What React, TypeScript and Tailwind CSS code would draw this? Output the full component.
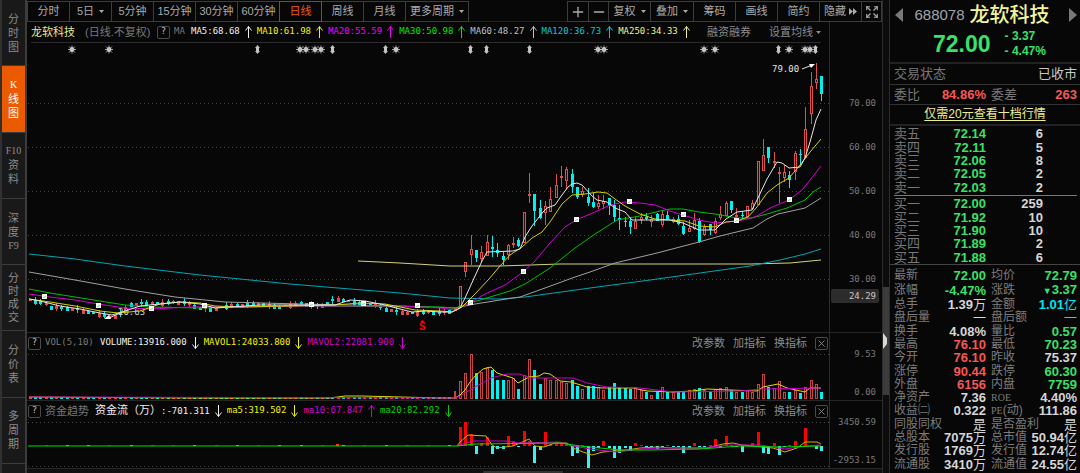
import { ReactNode } from 'react';
import { Expand, Minus, Plus, X } from 'lucide-react';

type Point = [number, number];

// kind, high, body top, body bottom, low (chart coordinates)
type Candle = ['u' | 'd', number, number, number, number];

const STEP = 5.314;
const RALLY_X = 460;

const rally: Candle[] = [
  ['u', 286, 286, 307, 307], ['u', 262, 262, 272, 277], ['u', 235, 249, 255, 265], ['d', 250, 250, 258, 262],
  ['u', 246, 252, 259, 262], ['u', 235, 242, 256, 256], ['d', 236, 247, 249, 257], ['d', 243, 250, 253, 257],
  ['d', 252, 256, 260, 265], ['u', 244, 245, 255, 260], ['u', 237, 243, 244, 248], ['d', 238, 240, 246, 247],
  ['u', 212, 212, 243, 243], ['u', 173, 194, 196, 203], ['d', 194, 194, 211, 226], ['d', 200, 208, 218, 219],
  ['u', 201, 206, 213, 225], ['u', 187, 199, 212, 212], ['u', 174, 185, 198, 198], ['u', 166, 176, 177, 187],
  ['u', 167, 169, 181, 190], ['d', 169, 174, 187, 193], ['d', 187, 187, 197, 199], ['u', 187, 191, 195, 197],
  ['d', 188, 197, 203, 206], ['d', 193, 202, 207, 208], ['u', 195, 203, 207, 209], ['u', 195, 201, 204, 209],
  ['d', 198, 198, 206, 215], ['d', 200, 205, 217, 222], ['d', 205, 218, 220, 230], ['d', 217, 221, 222, 227],
  ['d', 217, 221, 227, 234], ['u', 217, 221, 229, 229], ['u', 213, 217, 220, 224], ['d', 213, 217, 219, 220],
  ['u', 215, 219, 222, 227], ['d', 213, 214, 221, 221], ['u', 211, 214, 225, 227], ['d', 211, 215, 219, 220],
  ['u', 217, 219, 222, 223], ['d', 215, 219, 224, 225], ['d', 222, 226, 234, 235], ['u', 220, 228, 232, 232],
  ['u', 213, 220, 229, 230], ['d', 218, 221, 242, 243], ['u', 224, 227, 235, 236], ['d', 224, 224, 230, 235],
  ['u', 218, 221, 233, 234], ['u', 206, 214, 218, 220], ['u', 201, 203, 216, 216], ['d', 201, 201, 210, 213],
  ['u', 208, 215, 217, 219], ['d', 211, 215, 216, 219], ['u', 206, 206, 217, 218], ['u', 200, 203, 209, 210],
  ['u', 161, 161, 205, 205], ['u', 139, 155, 171, 171], ['d', 147, 147, 158, 163], ['u', 152, 161, 163, 168],
  ['u', 167, 172, 174, 203], ['u', 165, 172, 178, 182], ['d', 171, 175, 180, 188], ['u', 151, 153, 172, 180],
  ['d', 149, 154, 155, 165], ['u', 107, 129, 158, 158], ['u', 72, 86, 114, 124], ['u', 63, 79, 83, 89],
  ['d', 76, 76, 94, 101],
];

const rallyVolumes = [
  18, 26, 45, 26, 27, 32, 29, 19, 19, 19, 21, 10, 24, 40, 29, 15, 21, 19, 19, 17, 16, 19, 13, 10, 13, 13, 12, 9, 12,
  16, 12, 12, 10, 12, 9, 7, 4, 7, 12, 7, 7, 7, 7, 9, 10, 11, 9, 7, 10, 11, 12, 9, 7, 7, 9, 7, 15, 25, 12, 11, 18, 7,
  7, 9, 6, 12, 19, 15, 7,
];

// positive = inflow, negative = outflow
const rallyFlow = [
  19, 24, 12, -8, 3, 9, -8, -3, -3, 10, 5, -1, 15, 5, -17, -4, 14, 2, 4, 3, 3, -10, -7, 1, -22, -5, -2, 5, -2, -12,
  -7, -2, -5, 3, 1, -1, -1, -3, -1, 1, -1, -1, -7, -2, 3, -1, -1, 1, 7, -1, 10, 1, -1, -6, 1, 3, 14, -7, -8, 3, -9,
  -1, 1, 5, -1, 18, 1, -3, -5,
];

// Closing levels before the rally
const basePath: Point[] = [
  [28, 300], [45, 303], [50, 307], [75, 309], [95, 313], [110, 317], [118, 315], [125, 308], [130, 304], [150, 303],
  [185, 302], [200, 308], [215, 309], [230, 305], [260, 304], [280, 307], [300, 303], [320, 306], [335, 299],
  [345, 300], [360, 303], [375, 304], [385, 309], [395, 311], [405, 313], [440, 312], [448, 311], [460, 307],
];

const ma5: Point[] = [
  [29, 299], [40, 301], [60, 306], [80, 309], [100, 313], [112, 315], [125, 311], [140, 306], [160, 304], [180, 302],
  [200, 304], [215, 308], [230, 307], [260, 305], [335, 305], [350, 300], [365, 301], [385, 305], [400, 309],
  [412, 312], [425, 311], [440, 312], [452, 312], [460, 308], [465, 298], [475, 276], [482, 261], [487, 252],
  [513, 251], [520, 249], [525, 237], [532, 226], [543, 212], [547, 208], [555, 205], [562, 195], [568, 187],
  [572, 184], [577, 183], [582, 185], [592, 196], [597, 200], [607, 202], [615, 208], [625, 212], [632, 220],
  [670, 220], [683, 223], [699, 230], [715, 230], [726, 219], [737, 212], [752, 210], [757, 200], [767, 179],
  [777, 162], [782, 163], [789, 168], [800, 167], [805, 158], [810, 142], [816, 120], [821, 109],
];
const ma10: Point[] = [
  [29, 299], [50, 302], [75, 306], [100, 311], [118, 313], [140, 311], [160, 304], [180, 302], [200, 303], [215, 306],
  [240, 307], [290, 306], [335, 305], [360, 303], [385, 304], [400, 307], [415, 310], [440, 311], [452, 312],
  [462, 307], [475, 294], [489, 279], [500, 266], [510, 255], [522, 247], [532, 238], [542, 232], [550, 222],
  [562, 204], [572, 195], [585, 194], [598, 192], [607, 193], [615, 199], [625, 206], [640, 214], [655, 219],
  [685, 221], [699, 226], [715, 227], [726, 222], [737, 221], [748, 217], [757, 207], [767, 193], [777, 185],
  [789, 178], [800, 165], [810, 152], [821, 139],
];
const ma20: Point[] = [
  [29, 294], [50, 297], [75, 300], [98, 304], [125, 308], [150, 309], [170, 308], [190, 307], [300, 306], [400, 306],
  [440, 308], [455, 310], [470, 303], [485, 294], [505, 285], [523, 272], [535, 261], [550, 243], [565, 227],
  [576, 220], [595, 212], [610, 205], [625, 202], [640, 203], [655, 205], [670, 211], [683, 215], [699, 220],
  [715, 223], [737, 221], [748, 219], [757, 216], [770, 208], [789, 200], [803, 189], [821, 166],
];
const ma30: Point[] = [
  [29, 289], [50, 293], [75, 297], [100, 301], [125, 305], [150, 307], [200, 308], [300, 306], [440, 307], [455, 308],
  [470, 303], [490, 297], [510, 291], [525, 284], [550, 268], [575, 248], [595, 234], [617, 220], [640, 216],
  [660, 211], [670, 209], [683, 209], [699, 212], [715, 214], [737, 218], [752, 218], [767, 214], [787, 208],
  [805, 200], [813, 192], [821, 187],
];
const ma60: Point[] = [
  [29, 272], [75, 280], [125, 289], [175, 297], [225, 302], [300, 304], [400, 306], [455, 308], [475, 304],
  [500, 300], [520, 297], [545, 288], [575, 277], [590, 272], [615, 263], [657, 253], [699, 242], [720, 236],
  [753, 228], [767, 219], [778, 214], [805, 208], [821, 198],
];
const ma120: Point[] = [
  [29, 254], [75, 259], [125, 266], [200, 275], [290, 284], [350, 289], [400, 293], [450, 298], [500, 299],
  [525, 297], [590, 288], [650, 280], [700, 273], [750, 266], [780, 260], [805, 254], [821, 249],
];
const ma250: Point[] = [[358, 261], [400, 263], [450, 266], [500, 266], [560, 264], [750, 264], [790, 263], [821, 260]];

const mavol1: Point[] = [
  [29, 397], [200, 398], [330, 398], [345, 396], [362, 396], [440, 398], [455, 398], [460, 395], [465, 390],
  [470, 382], [475, 376], [483, 369], [491, 367], [497, 373], [513, 378], [518, 383], [529, 377], [539, 376],
  [544, 373], [550, 374], [560, 381], [571, 382], [587, 387], [603, 388], [633, 388], [647, 391], [672, 392],
  [693, 391], [707, 389], [730, 390], [757, 391], [763, 387], [778, 384], [787, 388], [805, 392], [810, 388], [821, 388],
];
const mavol2: Point[] = [
  [29, 397], [455, 398], [460, 396], [475, 387], [491, 378], [507, 374], [520, 374], [530, 378], [573, 378],
  [587, 383], [607, 387], [640, 388], [673, 392], [740, 391], [763, 389], [821, 388],
];

const flow5: Point[] = [
  [457, 446], [460, 442], [468, 435], [486, 436], [492, 445], [497, 448], [513, 446], [520, 443], [529, 439],
  [535, 446], [544, 447], [555, 443], [567, 443], [573, 448], [583, 452], [592, 455], [603, 452], [627, 450],
  [640, 448], [657, 447], [673, 448], [707, 448], [723, 444], [733, 443], [742, 445], [773, 448], [785, 452],
  [797, 448], [805, 442], [817, 442], [821, 444],
];
const flow10: Point[] = [
  [457, 446], [473, 441], [507, 441], [518, 443], [560, 442], [573, 446], [590, 449], [617, 452], [640, 449],
  [660, 448], [700, 448], [730, 445], [760, 445], [785, 449], [805, 446], [821, 445],
];
const flow20: Point[] = [
  [28, 446], [457, 446], [475, 444], [560, 443], [580, 446], [620, 450], [650, 450], [700, 449], [740, 446],
  [780, 447], [821, 446],
];

const markers: Point[] = [
  [44, 297], [98, 306], [151, 309], [204, 306], [311, 305], [363, 304], [417, 306], [470, 303], [523, 272],
  [576, 220], [629, 202], [683, 215], [736, 221], [789, 200],
];

const stars = [72, 109, 300, 306, 315, 321, 396, 598, 604, 704, 715, 789, 805, 810];
const pins = [257, 332, 385, 470, 486, 529, 778, 815];

const periods = ['分时', '5日', '5分钟', '15分钟', '30分钟', '60分钟', '日线', '周线', '月线'];

const sideTabs = [
  ['分', '时', '图'],
  ['K', '线', '图'],
  ['F10', '资', '料'],
  ['深', '度', 'F9'],
  ['分', '时', '成', '交'],
  ['分', '价', '表'],
  ['多', '周', '期'],
];

const averages = [
  { text: 'MA5:68.68', color: 'text-[#f0f0f0]' },
  { text: 'MA10:61.98', color: 'text-[#f0f000]' },
  { text: 'MA20:55.59', color: 'text-[#f000f0]' },
  { text: 'MA30:50.98', color: 'text-[#00e600]' },
  { text: 'MA60:48.27', color: 'text-[#bebebe]' },
  { text: 'MA120:36.73', color: 'text-[#00c8d7]' },
  { text: 'MA250:34.33', color: 'text-[#f0f082]' },
];

const asks = [['卖五', '72.14', '6'], ['卖四', '72.11', '5'], ['卖三', '72.06', '8'], ['卖二', '72.05', '2'], ['卖一', '72.03', '2']];
const bids = [['买一', '72.00', '259'], ['买二', '71.92', '10'], ['买三', '71.90', '10'], ['买四', '71.89', '2'], ['买五', '71.88', '6']];

const UP = 'text-[#f75757]';
const DOWN = 'text-[#3be068]';
const FLAT = 'text-[#d6d6d6]';
const CYAN = 'text-[#00e6f0]';

const stats = [
  ['最新', '72.00', DOWN, '均价', '72.79', DOWN],
  ['涨幅', '-4.47%', DOWN, '涨跌', '▼3.37', DOWN],
  ['总手', '1.39万', FLAT, '金额', '1.01亿', CYAN],
  ['盘后量', '一', FLAT, '盘后额', '一', CYAN],
  ['换手', '4.08%', FLAT, '量比', '0.57', DOWN],
  ['最高', '76.10', UP, '最低', '70.23', DOWN],
  ['今开', '76.10', UP, '昨收', '75.37', FLAT],
  ['涨停', '90.44', UP, '跌停', '60.30', DOWN],
  ['外盘', '6156', UP, '内盘', '7759', DOWN],
  ['净资产', '7.36', FLAT, 'ROE', '4.40%', FLAT],
  ['收益㈡', '0.322', FLAT, 'PE(动)', '111.86', FLAT],
  ['同股同权', '是', FLAT, '是否盈利', '是', FLAT],
  ['总股本', '7075万', FLAT, '总市值', '50.94亿', FLAT],
  ['发行股', '1769万', FLAT, '发行值', '12.74亿', FLAT],
  ['流通股', '3410万', FLAT, '流通值', '24.55亿', FLAT],
];

function levelAt(x: number) {
  const i = basePath.findIndex((p) => p[0] > x);
  const [x0, y0] = basePath[i - 1];
  const [x1, y1] = basePath[i];
  return y0 + ((y1 - y0) * (x - x0)) / (x1 - x0);
}

const baseCandles = Array.from({ length: 81 }, (_, i) => {
  const x = Math.round(RALLY_X - STEP * (81 - i));
  const up = (i * 7) % 5 < 2 || (i * 3) % 11 === 4;
  return { x, y: Math.round(levelAt(x)), up, size: 2 + ((i * 5) % 3), wick: 1 + ((i * 7) % 4) };
});

const toPoints = (points: Point[]) => points.map((p) => p.join(',')).join(' ');

function Line({ points, color }: { points: Point[]; color: string }) {
  return <polyline points={toPoints(points)} fill="none" stroke={color} strokeWidth="1" />;
}

function GridLine({ y }: { y: number }) {
  return <path d={`M28 ${y + 0.5}H829`} stroke="#454545" strokeDasharray="1 3" />;
}

function PriceChart() {
  return (
    <svg viewBox="27 43 802 289" className="block min-h-0 w-full flex-1">
      {[103, 147, 191, 235, 279].map((y) => <GridLine key={y} y={y} />)}

      {stars.map((x) => (
        <g key={x} stroke="#c4c4c4">
          <circle cx={x} cy="49.5" r="2" fill="#c4c4c4" />
          <path d={`M${x - 4} 49.5h8M${x} 45.5v8M${x - 3} 46.5l6 6M${x + 3} 46.5l-6 6`} strokeWidth="0.8" />
        </g>
      ))}
      {pins.map((x) => (
        <path key={x} d={`M${x + 0.5} 45l2.500 3h-1v3h1l-2.500 3l-2.500-3h1v-3h-1z`} fill="#c4c4c4" />
      ))}

      {baseCandles.map((c) => (
        <g key={c.x} fill={c.up ? '#e04848' : '#00e6e6'}>
          <rect x={c.x - 1} y={c.y - 1} width="3" height={c.size} />
          <rect x={c.x} y={c.y - c.wick} width="1" height={c.wick * 2} />
        </g>
      ))}
      {rally.map(([kind, high, top, bottom, low], i) => {
        const x = Math.round(RALLY_X + STEP * i);
        return kind === 'd' ? (
          <g key={i} fill="#00f0f0">
            <rect x={x - 1} y={top} width="3" height={Math.max(1, bottom - top)} />
            <rect x={x} y={high} width="1" height={low - high} />
          </g>
        ) : (
          <g key={i} stroke="#dc5050" fill="#2a0c0c">
            <path d={`M${x + 0.5} ${high}V${low}`} />
            <rect x={x - 0.5} y={top + 0.5} width="2" height={Math.max(1, bottom - top - 1)} />
          </g>
        );
      })}

      <text x="118" y="315" fontSize="9" fill="#d0d0d0" className="font-['DejaVu_Sans_Mono']">20.63</text>
      <path d="M120 313L109 318" stroke="#e0e0e0" />
      <path d="M104 319l5-4 2 4z" fill="#fff" />

      <Line points={ma250} color="#d2d278" />
      <Line points={ma120} color="#00a5b4" />
      <Line points={ma60} color="#a0a0a0" />
      <Line points={ma30} color="#00be00" />
      <Line points={ma20} color="#d200d2" />
      <Line points={ma10} color="#d2d200" />
      <Line points={ma5} color="#e6e6e6" />

      {markers.map(([x, y]) => (
        <g key={x}>
          <rect x={x - 2} y={y - 3} width="5" height="5" fill="#fff" />
          <path d={`M${x - 1} ${y + 0.5}l3-1`} stroke="#7bdc7b" />
        </g>
      ))}

      <text x="772" y="72" fontSize="9" fill="#e0e0e0" className="font-['DejaVu_Sans_Mono']">79.00</text>
      <path d="M802 69L811 65.500" stroke="#e0e0e0" />
      <path d="M815 64l-6 0 2 4z" fill="#fff" />

      <text x="419" y="330" fontSize="10" fontWeight="700" fill="#f00" className="font-['Liberation_Sans']">S</text>
      <path d="M420 322l2.500-2 2.500 2z" fill="#f00" />
    </svg>
  );
}

function VolumeChart() {
  return (
    <svg viewBox="27 353 802 47" className="block h-[47px] w-full">
      <GridLine y={354} />
      {baseCandles.map((c, i) => (
        <rect key={i} x={c.x - 1} y="397" width="3" height="2" fill={c.up ? '#e04848' : '#00e6e6'} />
      ))}
      {rallyVolumes.map((h, i) => {
        const x = Math.round(RALLY_X + STEP * i);
        return rally[i][0] === 'd' ? (
          <rect key={i} x={x - 1} y={399 - h} width="3" height={h} fill="#00f0f0" />
        ) : (
          <rect key={i} x={x - 0.5} y={399.5 - h} width="2" height={h - 1} fill="#2a0c0c" stroke="#c34646" />
        );
      })}
      <rect x="454" y="391" width="2" height="8" fill="#c34646" />
      <Line points={mavol1} color="#dcdc00" />
      <Line points={mavol2} color="#c800c8" />
    </svg>
  );
}

function FlowChart() {
  return (
    <svg viewBox="27 421 802 47" className="block h-[47px] w-full">
      <GridLine y={422} />
      <GridLine y={466} />
      {baseCandles.filter((_, i) => (i * 7) % 4 === 1).map((c) => (
        <rect key={c.x} x={c.x - 1} y="445" width="3" height="1" fill={c.up ? '#c80000' : '#32dcdc'} />
      ))}
      <rect x="336" y="444" width="3" height="2" fill="#ff3c00" />
      {rallyFlow.map((v, i) => (
        <rect
          key={i}
          x={Math.round(RALLY_X + STEP * i) - 1}
          y={v > 0 ? 446 - v : 446}
          width="3"
          height={Math.abs(v)}
          fill={v > 0 ? '#ff0000' : '#3cf0f0'}
        />
      ))}
      <Line points={flow5} color="#c8b400" />
      <Line points={flow10} color="#c800c8" />
      <Line points={flow20} color="#00dc00" />
    </svg>
  );
}

function Arrow({ down = false }: { down?: boolean }) {
  return (
    <svg viewBox="0 0 7 12" className="h-3 w-[7px] shrink-0" fill="none" stroke="currentColor">
      <path d={down ? 'M3.500 0V11.500M.5 7.500L3.500 11.500L6.500 7.500' : 'M3.500 12V.5M.5 4.500L3.500 .5L6.500 4.500'} />
    </svg>
  );
}

function Caret() {
  return (
    <svg viewBox="0 0 5 3" className="h-[3px] w-[5px] shrink-0" fill="currentColor">
      <path d="M0 0h5L2.500 3z" />
    </svg>
  );
}

function HelpButton() {
  return (
    <button aria-label="说明" className="flex h-[13px] w-[13px] shrink-0 items-center justify-center rounded-xs border border-[#4a4a4a] font-['DejaVu_Sans_Mono'] text-[9px] text-[#c0c0c0]">
      ?
    </button>
  );
}

function Reading({ text, color, down }: { text: ReactNode; color: string; down?: boolean }) {
  return (
    <span className={`flex items-center gap-[5px] ${color}`}>
      <span className="font-['DejaVu_Sans_Mono','Noto_Sans_CJK_SC',monospace] text-[9px]">{text}</span>
      <Arrow down={down} />
    </span>
  );
}

function ToolButton({ children, width, active, label }: { children: ReactNode; width: string; active?: boolean; label?: string }) {
  return (
    <button
      aria-label={label}
      className={`-ml-px flex h-[21px] items-center justify-center gap-[5px] border ${width} ${
        active ? 'relative border-[#a04010] text-[#f05a0a]' : 'border-[#3c3c3c]'
      }`}
    >
      {children}
    </button>
  );
}

function PanelHeader({ children }: { children: ReactNode }) {
  return (
    <div className="flex h-5 items-center pl-px pr-px">
      {children}
      <div className="ml-auto flex items-center gap-2 text-[11px] text-[#8c8c8c]">
        <button>改参数</button>
        <button>加指标</button>
        <button>换指标</button>
        <button aria-label="关闭" className="flex h-[13px] w-[13px] items-center justify-center rounded-xs border border-[#4a4a4a]">
          <X size={11} strokeWidth={2} />
        </button>
      </div>
    </div>
  );
}

function OrderTable({ rows, label }: { rows: string[][]; label: string }) {
  return (
    <table aria-label={label} className="h-[67px] w-full table-fixed text-[13px] leading-[13px]">
      <tbody>
        {rows.map(([name, price, amount]) => (
          <tr key={name}>
            <th className="w-[36px] p-0 text-left font-normal whitespace-nowrap text-[#787878]">{name}</th>
            <td className={`w-[56px] p-0 text-right font-bold ${DOWN}`}>{price}</td>
            <td className={`p-0 pr-[34px] text-right font-bold ${FLAT}`}>{amount}</td>
          </tr>
        ))}
      </tbody>
    </table>
  );
}

function StatLabel({ text }: { text: string }) {
  const [, latin, rest] = text.match(/^([A-Z]*)(.*)$/) ?? [];
  return (
    <>
      {latin && <span className="font-['Liberation_Serif',serif] text-[10px]">{latin}</span>}
      {rest}
    </>
  );
}

// Keeps the unit (万 / 亿) at normal weight next to the bold figure
function Value({ text }: { text: string }) {
  const match = text.match(/^([^万亿一是]*)([万亿一是]?)$/);
  return (
    <>
      {match?.[1].startsWith('▼') ? <><span className="text-[9px]">▼</span>{match[1].slice(1)}</> : match?.[1]}
      <span className="font-normal">{match?.[2]}</span>
    </>
  );
}

function QuotePanel() {
  return (
    <aside className="flex w-[191px] shrink-0 flex-col border-l border-[#2c2c2c] text-[13px]">
      <header className="h-16 border-b-2 border-[#222]">
        <div className="flex h-[30px] items-center justify-between pl-[5px] pr-[3px]">
          <button aria-label="上一只" className="text-[#787878]">
            <svg viewBox="0 0 8 14" className="h-3.5 w-2" fill="currentColor"><path d="M8 0v14L0 7z" /></svg>
          </button>
          <h1 className="flex items-center gap-[5px] pr-2">
            <span className="text-[15px] text-[#a0a4ac]">688078</span>
            <span className="text-[20px] leading-6 font-medium text-[#f4f49c]">龙软科技</span>
          </h1>
          <button aria-label="下一只" className="text-[#787878]">
            <svg viewBox="0 0 8 14" className="h-3.5 w-2" fill="currentColor"><path d="M0 0v14L8 7z" /></svg>
          </button>
        </div>
        <div className={`-mt-px flex items-center gap-3.5 pl-[43px] font-bold ${DOWN}`}>
          <span className="text-[23px] leading-[26px]">72.00</span>
          <span className="text-xs leading-[15px]">- 3.37<br />- 4.47%</span>
        </div>
      </header>
      <div className="flex h-[21px] items-center justify-between border-b border-[#333] pl-1 pr-[3px]">
        <span className="text-[#787878]">交易状态</span>
        <span className="text-[#c8c8c8]">已收市</span>
      </div>
      <div className="flex h-5 items-center border-b border-[#333] pl-1 pr-[3px]">
        <span className="text-[#787878]">委比</span>
        <span className={`ml-auto font-bold ${UP}`}>84.86%</span>
        <span className="ml-[5px] text-[#787878]">委差</span>
        <span className={`w-[60px] text-right font-bold ${UP}`}>263</span>
      </div>
      <div className="flex h-[21px] items-center justify-center border-b-2 border-[#222]">
        <a href="#level2" className="text-xs leading-[15px] text-[#ecec90] underline underline-offset-2">仅需20元查看十档行情</a>
      </div>
      <div className="pl-1 pr-[3px] pt-px">
        <OrderTable rows={asks} label="卖盘" />
        <hr className="my-px border-[#787878]" />
        <OrderTable rows={bids} label="买盘" />
      </div>
      <div className="min-h-0 flex-1 border-t border-[#444] pb-[2px] pl-1 pr-[3px] pt-1">
        <table aria-label="行情数据" className="h-full w-full table-fixed text-[13px] leading-[13px]">
          <tbody>
            {stats.map(([nameA, valueA, colorA, nameB, valueB, colorB]) => (
              <tr key={nameA}>
                <th className="w-[40px] p-0 text-left text-xs leading-[13px] font-normal whitespace-nowrap text-[#7c7c7c]"><StatLabel text={nameA} /></th>
                <td className={`w-[52px] p-0 text-right font-bold whitespace-nowrap ${colorA}`}><Value text={valueA} /></td>
                <th className="w-[44px] p-0 pl-[5px] text-left text-xs leading-[13px] font-normal whitespace-nowrap text-[#7c7c7c]"><StatLabel text={nameB} /></th>
                <td className={`p-0 text-right font-bold whitespace-nowrap ${colorB}`}><Value text={valueB} /></td>
              </tr>
            ))}
          </tbody>
        </table>
      </div>
    </aside>
  );
}

export default function App() {
  return (
    <div className="flex h-screen overflow-hidden bg-[#070707] font-['Liberation_Sans','Noto_Sans_CJK_SC',sans-serif] text-[11px] text-[#aaa]">
      <nav className="flex w-[27px] shrink-0 flex-col border-l-2 border-[#303030] bg-[#191919]">
        {sideTabs.map((chars, i) => (
          <button
            key={i}
            className={`flex min-h-0 flex-[66] flex-col items-center justify-center border-r-2 border-b border-[#3c3c3c] ${
              i === 1 ? 'bg-[#ec5a00] text-white' : 'text-[#8c8c8c]'
            } ${chars.length === 4 ? 'leading-[13px]' : 'leading-[14px]'}`}
          >
            {chars.map((c) => (
              <span key={c} className={/[A-Z]/.test(c) ? "font-['Liberation_Serif',serif] text-[10px]" : ''}>{c}</span>
            ))}
          </button>
        ))}
        <div className="flex-[9] border-r-2 border-[#3c3c3c]" />
      </nav>

      <main className="flex min-w-0 flex-1 flex-col">
        <div className="flex h-[22px] shrink-0 items-start justify-between border-b border-[#222] pt-px pl-px">
          <div className="flex">
            {periods.map((p) => (
              <ToolButton key={p} width="w-[43px]" active={p === '日线'}>
                {p}
                {p === '5日' && <Caret />}
              </ToolButton>
            ))}
            <ToolButton width="w-16">更多周期<Caret /></ToolButton>
          </div>
          <div className="flex">
            <ToolButton width="w-[22px]" label="放大"><Plus size={16} strokeWidth={2} /></ToolButton>
            <ToolButton width="w-[21px]" label="缩小"><Minus size={16} strokeWidth={2} /></ToolButton>
            <ToolButton width="w-[43px]">复权<Caret /></ToolButton>
            <ToolButton width="w-11">叠加<Caret /></ToolButton>
            <ToolButton width="w-[43px]">筹码</ToolButton>
            <ToolButton width="w-[43px]">画线</ToolButton>
            <ToolButton width="w-[43px]">简约</ToolButton>
            <ToolButton width="w-[43px]">
              隐藏
              <svg viewBox="0 0 8 7" className="-ml-0.5 h-[7px] w-2" fill="currentColor"><path d="M0 0l4 3.500-4 3.500zM4 0l4 3.500-4 3.500z" /></svg>
            </ToolButton>
            <ToolButton width="w-[21px]" label="全屏"><Expand size={14} strokeWidth={2} /></ToolButton>
          </div>
        </div>

        <section className="flex min-h-0 flex-1">
          <div className="flex min-w-0 flex-1 flex-col">
            <div className="mr-2 ml-1 flex h-[21px] shrink-0 items-center border-b border-[#2c2c2c] whitespace-nowrap">
              <h2 className="w-[50px] text-[#e6e696]">龙软科技</h2>
              <span className="w-[76px] pl-1 text-[#787878]">(日线.不复权)</span>
              <HelpButton />
              <span className="ml-1 w-[17px] font-['DejaVu_Sans_Mono'] text-[9px] text-[#787878]">MA</span>
              <div className="flex gap-[5px]">
                {averages.map((m) => <Reading key={m.text} text={m.text} color={m.color} />)}
              </div>
              <div className="ml-auto flex items-center gap-[18px] text-[#8c8c8c]">
                <button>融资融券</button>
                <button className="flex items-center gap-[3px]">设置均线<Caret /></button>
              </div>
            </div>
            <PriceChart />
          </div>
          <div className="relative w-[53px] shrink-0 border-l border-[#2c2c2c] pt-[59px] pr-[6px] text-right font-['DejaVu_Sans_Mono'] text-[9px] leading-[44px] text-[#787878]">
            {['70.00', '60.00', '50.00', '40.00', '30.00'].map((t) => <div key={t}>{t}</div>)}
            <div className="absolute top-[267px] right-[3px] left-px rounded-xs bg-[#2c2c2c] pr-[3px] leading-[14px] text-[#c8c8c8]">24.29</div>
          </div>
        </section>

        <section className="flex h-[68px] shrink-0 border-t border-[#262626]">
          <div className="min-w-0 flex-1">
            <PanelHeader>
              <HelpButton />
              <span className="ml-1 w-[55px] font-['DejaVu_Sans_Mono'] text-[9px] text-[#787878]">VOL(5,10)</span>
              <div className="flex gap-[5px]">
                <Reading text="VOLUME:13916.000" color="text-[#f0f0f0]" down />
                <Reading text="MAVOL1:24033.800" color="text-[#f0f000]" down />
                <Reading text="MAVOL2:22081.900" color="text-[#d200d2]" down />
              </div>
            </PanelHeader>
            <VolumeChart />
          </div>
          <div className="flex w-[53px] shrink-0 flex-col justify-between border-l border-[#2c2c2c] pt-[15px] pr-[6px] pb-[2px] text-right font-['DejaVu_Sans_Mono'] text-[9px] leading-3 text-[#787878]">
            <span>9.53</span>
            <span>0.00</span>
          </div>
        </section>

        <section className="flex h-[68px] shrink-0 border-t border-[#262626]">
          <div className="min-w-0 flex-1">
            <PanelHeader>
              <HelpButton />
              <span className="ml-1 w-[50px] text-[#787878]">资金趋势</span>
              <div className="flex gap-[5px]">
                <Reading text={<><span className="text-[11px]">资金流（万）</span>:-701.311</>} color="text-[#f0f0f0]" down />
                <Reading text="ma5:319.502" color="text-[#f0f000]" down />
                <Reading text="ma10:67.847" color="text-[#d200d2]" />
                <Reading text="ma20:82.292" color="text-[#00d200]" down />
              </div>
            </PanelHeader>
            <FlowChart />
          </div>
          <div className="flex w-[53px] shrink-0 flex-col justify-between border-l border-[#2c2c2c] pt-[15px] pr-[6px] pb-[2px] text-right font-['DejaVu_Sans_Mono'] text-[9px] leading-3 text-[#787878]">
            <span>3450.59</span>
            <span>-2953.15</span>
          </div>
        </section>

        <div className="flex h-[5px] shrink-0 items-end border-t border-[#262626] bg-[#101010]">
          <div className="flex-[456]" />
          <div className="h-[2px] w-20 rounded-full bg-[#333]" />
          <div className="flex-[319]" />
        </div>
      </main>

      <div className="flex w-[7px] shrink-0 flex-col border-l border-[#2c2c2c] bg-[#0c0c0c]">
        <div className="flex-[287]" />
        <button aria-label="收起侧栏" className="flex flex-[108] items-center bg-[#3c3c3c]">
          <svg viewBox="0 0 5 16" className="h-4 w-[5px]" fill="#d8d8d8"><path d="M0 0l4 5v6l-4 5z" /></svg>
        </button>
        <div className="flex-[78]" />
      </div>

      <QuotePanel />
    </div>
  );
}
